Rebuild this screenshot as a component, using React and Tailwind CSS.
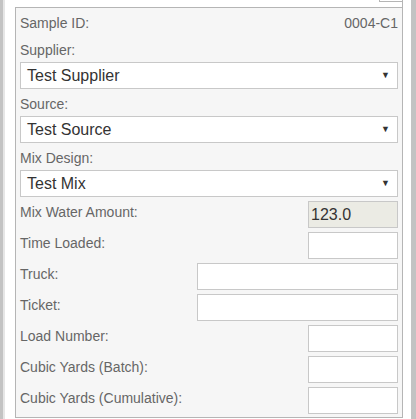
import React from "react";

const font = { fontFamily: '"Liberation Sans", Arial, sans-serif' };

function SelectBox({ value }) {
  return (
    <div className="flex h-[27px] items-center justify-between border border-[#c8c8c8] bg-white pl-[6px] pr-[7px]">
      <span className="text-[16px] leading-[20px] text-[#333]">{value}</span>
      <span className="text-[9px] leading-none text-[#333]">▼</span>
    </div>
  );
}

function Row({ label, width, value, disabled }) {
  return (
    <div className="flex h-[27px] items-start justify-between">
      <span className="pt-[1px] text-[14px] leading-[20px] text-[#666]">{label}</span>
      <div
        className={`h-[27px] border border-[#c8c8c8] pl-[2px] text-[16px] leading-[25px] text-[#333] ${
          disabled ? "bg-[#ebebe4]" : "bg-white"
        } ${width}`}
      >
        {value}
      </div>
    </div>
  );
}

export default function App() {
  return (
    <div className="flex h-[419px] w-[416px] overflow-hidden bg-white" style={font}>
      <div className="w-[3px] bg-[#c3c3c3]" />
      <div className="w-[2px] bg-[#e6e6e6]" />
      <div className="flex flex-1 flex-col pl-[10px] pr-[8px]">
        <div className="flex h-[7px] justify-end">
          <div className="h-full w-[24px] border-r border-[#b5b5b5]">
            <div className="h-[2px] border-b border-l border-[#b5b5b5]" />
          </div>
        </div>
        <div className="flex h-[411px] flex-col border border-[#b5b5b5] bg-[#f6f6f6] px-[4px] pt-[5px]">
          <div className="flex justify-between text-[14px] leading-[20px] text-[#666]">
            <span>Sample ID:</span>
            <span>0004-C1</span>
          </div>
          <div className="mt-[7px] text-[14px] leading-[20px] text-[#666]">Supplier:</div>
          <div className="mt-[2px]">
            <SelectBox value="Test Supplier" />
          </div>
          <div className="mt-[5px] text-[14px] leading-[20px] text-[#666]">Source:</div>
          <div className="mt-[2px]">
            <SelectBox value="Test Source" />
          </div>
          <div className="mt-[5px] text-[14px] leading-[20px] text-[#666]">Mix Design:</div>
          <div className="mt-[2px]">
            <SelectBox value="Test Mix" />
          </div>
          <div className="mt-[4px] flex flex-col gap-[4px]">
            <Row label="Mix Water Amount:" width="w-[90px]" value="123.0" disabled />
            <Row label="Time Loaded:" width="w-[90px]" />
            <Row label="Truck:" width="w-[201px]" />
            <Row label="Ticket:" width="w-[201px]" />
            <Row label="Load Number:" width="w-[90px]" />
            <Row label="Cubic Yards (Batch):" width="w-[90px]" />
            <Row label="Cubic Yards (Cumulative):" width="w-[90px]" />
          </div>
        </div>
      </div>
      <div className="w-[5px] bg-[#c3c3c3]" />
    </div>
  );
}
